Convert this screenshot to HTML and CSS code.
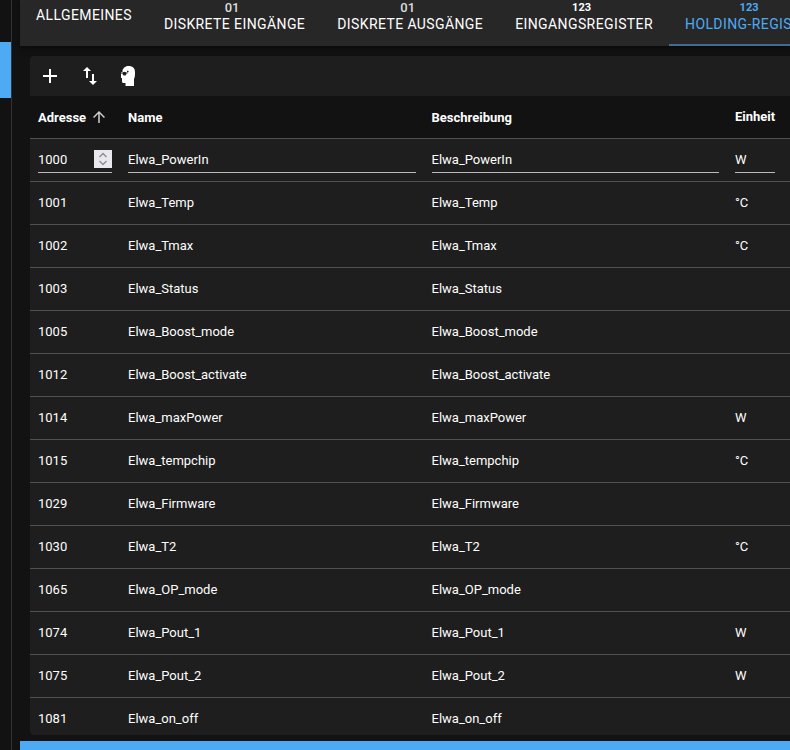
FILE: index.html
```html
<!DOCTYPE html>
<html lang="de">
  <head>
    <meta charset="utf-8">
    <title>Modbus</title>
    <link rel="stylesheet" href="styles.css">
  </head>
  <body>
    <aside class="sidebar">
      <div class="sidebar-active"></div>
    </aside>
    <main class="main">
      <nav class="tabs" role="tablist">
        <button class="tab plain" role="tab">Allgemeines</button>
        <button class="tab" role="tab"><span class="bits">01</span>Diskrete Eingänge</button>
        <button class="tab" role="tab"><span class="bits">01</span>Diskrete Ausgänge</button>
        <button class="tab" role="tab"><span class="digits">123</span>Eingangsregister</button>
        <button class="tab selected" role="tab" aria-selected="true"><span class="digits">123</span>Holding-Register</button>
      </nav>
      <section class="panel">
        <div class="toolbar">
          <button class="icon-btn" aria-label="Hinzufügen">
            <svg viewBox="0 0 24 24" width="24" height="24"><path d="M19 13h-6v6h-2v-6H5v-2h6V5h2v6h6v2z"/></svg>
          </button>
          <button class="icon-btn" aria-label="Import/Export">
            <svg viewBox="0 0 24 24" width="24" height="24"><path d="M9 3L5 6.99h3V14h2V6.99h3L9 3zm7 14.01V10h-2v7.01h-3L15 21l4-3.99h-3z"/></svg>
          </button>
          <button class="icon-btn" aria-label="Expertenmodus">
            <svg viewBox="0 0 24 24" width="24" height="24">
              <path d="M9 2h3q5 1 5 6v2q0 3-1 5v7H7.500v-3H5q-1 0-1-2v-3H3V8h1.500V6q1-3 4.500-4z"/>
              <circle class="eye" cx="6.500" cy="9.700" r="1.900"/>
              <path class="eye" d="M3 8.500h3v1H3zM8 8.500h1.500v1H8zM9 6.800h1.500v1.500H9z"/>
            </svg>
          </button>
        </div>
        <table class="registers">
          <colgroup>
            <col class="col-address">
            <col>
            <col>
            <col class="col-unit">
          </colgroup>
          <thead>
            <tr>
              <th><span class="sort">Adresse <svg viewBox="0 0 24 24" width="18" height="18"><path d="M4 12l1.410 1.410L11 7.830V20h2V7.830l5.580 5.590L20 12l-8-8-8 8z"/></svg></span></th>
              <th><span class="sort">Name</span></th>
              <th><span class="sort">Beschreibung</span></th>
              <th>Einheit</th>
            </tr>
          </thead>
          <tbody>
            <tr>
              <td>
                <div class="field">
                  <input type="number" value="1000" aria-label="Adresse">
                  <span class="spinner"><svg viewBox="0 0 18 18" width="18" height="18"><path d="M5.500 7L9 3.500 12.500 7M5.500 11L9 14.500l3.500-3.500"/></svg></span>
                </div>
              </td>
              <td><div class="field"><input type="text" value="Elwa_PowerIn" aria-label="Name"></div></td>
              <td><div class="field"><input type="text" value="Elwa_PowerIn" aria-label="Beschreibung"></div></td>
              <td><div class="field"><input type="text" value="W" aria-label="Einheit"></div></td>
            </tr>
            <tr><td>1001</td><td>Elwa_Temp</td><td>Elwa_Temp</td><td>°C</td></tr>
            <tr><td>1002</td><td>Elwa_Tmax</td><td>Elwa_Tmax</td><td>°C</td></tr>
            <tr><td>1003</td><td>Elwa_Status</td><td>Elwa_Status</td><td></td></tr>
            <tr><td>1005</td><td>Elwa_Boost_mode</td><td>Elwa_Boost_mode</td><td></td></tr>
            <tr><td>1012</td><td>Elwa_Boost_activate</td><td>Elwa_Boost_activate</td><td></td></tr>
            <tr><td>1014</td><td>Elwa_maxPower</td><td>Elwa_maxPower</td><td>W</td></tr>
            <tr><td>1015</td><td>Elwa_tempchip</td><td>Elwa_tempchip</td><td>°C</td></tr>
            <tr><td>1029</td><td>Elwa_Firmware</td><td>Elwa_Firmware</td><td></td></tr>
            <tr><td>1030</td><td>Elwa_T2</td><td>Elwa_T2</td><td>°C</td></tr>
            <tr><td>1065</td><td>Elwa_OP_mode</td><td>Elwa_OP_mode</td><td></td></tr>
            <tr><td>1074</td><td>Elwa_Pout_1</td><td>Elwa_Pout_1</td><td>W</td></tr>
            <tr><td>1075</td><td>Elwa_Pout_2</td><td>Elwa_Pout_2</td><td>W</td></tr>
            <tr><td>1081</td><td>Elwa_on_off</td><td>Elwa_on_off</td><td></td></tr>
          </tbody>
        </table>
      </section>
      <footer class="footer"></footer>
    </main>
  </body>
</html>
```

FILE: styles.css
```css
* {
  box-sizing: border-box;
}
body {
  margin: 0;
  height: 100vh;
  display: flex;
  gap: 8px;
  overflow: hidden;
  background: #121212;
  color: #fff;
  font-family: Roboto, "Liberation Sans", sans-serif;
  font-size: 13px;
}
button {
  border: 0;
  padding: 0;
  background: none;
  color: inherit;
  font: inherit;
}
svg {
  display: block;
  fill: currentColor;
}

.sidebar {
  flex: none;
  width: 12px;
  padding-top: 42px;
  border-right: 1px solid #333;
}
.sidebar-active {
  height: 56px;
  background: #4dabf5;
}

.main {
  flex: 1;
  min-width: 0;
  display: flex;
  flex-direction: column;
}

.tabs {
  flex: none;
  display: flex;
  height: 46px;
  overflow: hidden;
  background: #272727;
  box-shadow: 0 2px 6px rgba(0, 0, 0, 0.5);
}
.tab {
  flex: none;
  display: flex;
  flex-direction: column;
  align-items: center;
  padding: 0 16px;
  font-size: 14px;
  line-height: 18px;
  letter-spacing: 0.02857em;
  text-transform: uppercase;
}
.tab.plain {
  padding-top: 6px;
}
.tab.selected {
  color: #4dabf5;
  border-bottom: 2px solid #436a93;
}
.bits,
.digits {
  height: 15px;
  padding-right: 5px;
  line-height: 15px;
  letter-spacing: normal;
}
.bits {
  font-size: 13px;
  font-weight: 500;
  color: #ddd;
}
.digits {
  font-size: 11px;
  font-weight: 700;
}

.panel {
  flex: 1;
  min-height: 0;
  margin: 10px 0 6px 10px;
  overflow: hidden;
  background: #1e1e1e;
  border-radius: 4px 0 0 4px;
}
.toolbar {
  display: flex;
  height: 40px;
}
.icon-btn {
  width: 40px;
  display: flex;
  align-items: center;
  justify-content: center;
}
.eye {
  fill: #1e1e1e;
}

.registers {
  width: 100%;
  table-layout: fixed;
  border-collapse: separate;
  border-spacing: 0;
}
.col-address {
  width: 90px;
}
.col-unit {
  width: 63px;
}
th,
td {
  height: 43px;
  padding: 0 8px;
  border-bottom: 1px solid #515151;
  line-height: 18px;
  text-align: left;
}
th {
  background: #121212;
  font-weight: 700;
}
th:last-child,
td:last-child {
  padding-right: 15px;
}
.sort {
  display: flex;
  align-items: center;
  gap: 4px;
  padding-top: 2px;
}
.sort svg {
  margin: -2px 0 0;
  opacity: 0.8;
}

.field {
  display: flex;
  align-items: center;
  height: 27px;
  margin-bottom: 2px;
  border-bottom: 1px solid #bbb;
}
.field input {
  flex: 1;
  width: 0;
  min-width: 0;
  height: 26px;
  border: 0;
  padding: 2px 0 0;
  outline: 0;
  background: none;
  color: inherit;
  font: inherit;
  appearance: textfield;
}
.field input::-webkit-inner-spin-button {
  display: none;
}
.spinner {
  flex: none;
  background: #e9e9ed;
}
.spinner svg {
  fill: none;
  stroke: #8f8f9d;
  stroke-width: 1.5;
}

.footer {
  flex: none;
  height: 9px;
  background: #4dabf5;
}
```
